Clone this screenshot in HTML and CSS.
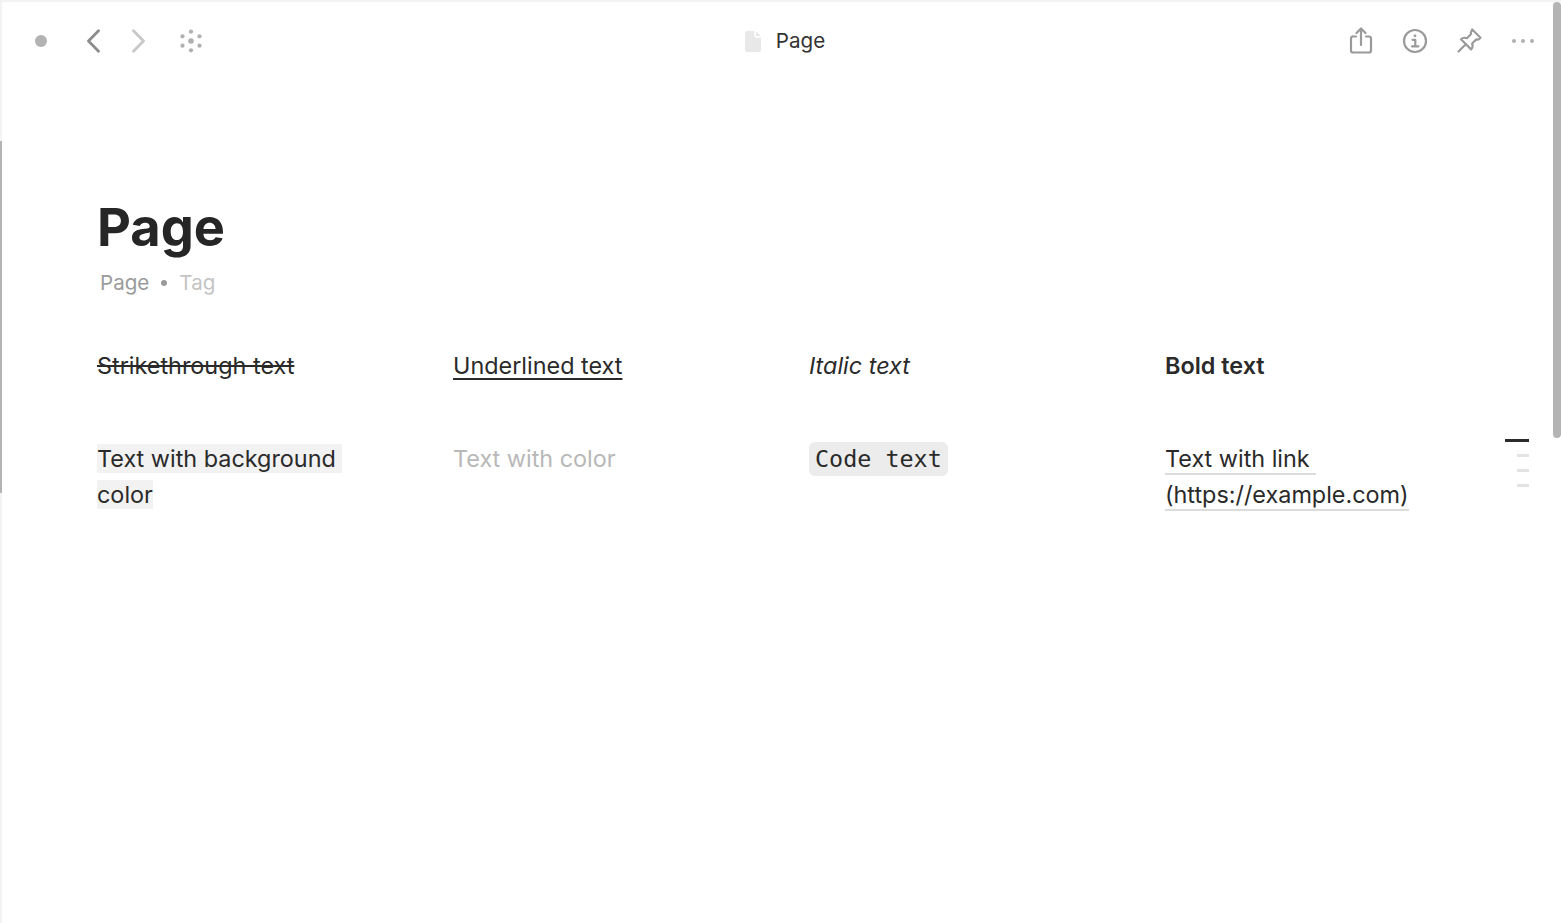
FILE: index.html
```html
<!DOCTYPE html>
<html lang="en">
<head>
    <meta charset="UTF-8">
    <meta name="viewport" content="width=device-width, initial-scale=1.0">
    <title>Page</title>
    <link rel="stylesheet" href="styles.css">
</head>
<body>

<div class="window">
    <div class="left-bar"></div>
    <div class="scroll-thumb"></div>

    <header class="topbar">
        <div class="topbar-left">
            <span class="status-dot"></span>
            <svg class="icon nav-back" viewBox="0 0 24 24"><path d="M17.5 1.8 7.5 12l10 10.200"/></svg>
            <svg class="icon nav-forward" viewBox="0 0 24 24"><path d="M6.500 1.800 16.500 12l-10 10.200"/></svg>
            <svg class="icon nav-graph" viewBox="0 0 24 24">
                <circle cx="12" cy="12" r="2.8"/>
                <circle cx="12" cy="2.700" r="2.100"/>
                <circle cx="12" cy="21.300" r="2.100"/>
                <circle cx="3.500" cy="7.300" r="2.100"/>
                <circle cx="20.500" cy="7.300" r="2.100"/>
                <circle cx="3.500" cy="16.700" r="2.100"/>
                <circle cx="20.500" cy="16.700" r="2.100"/>
            </svg>
        </div>

        <div class="topbar-title">
            <svg class="doc-icon" viewBox="0 0 16 21"><path d="M2 0h7.200v4.600c0 1.200.9 2.100 2.100 2.100H16V19a2 2 0 0 1-2 2H2a2 2 0 0 1-2-2V2a2 2 0 0 1 2-2Zm9 .3 4.700 4.800h-3.800c-.5 0-.9-.4-.9-.9V.3Z"/></svg>
            <span class="topbar-name">Page</span>
        </div>

        <div class="topbar-right">
            <svg class="icon action" viewBox="0 0 28 28">
                <path d="M9 9.500H6.500A2 2 0 0 0 4 11.500v12A2 2 0 0 0 6 25.500h16a2 2 0 0 0 2-2v-12a2 2 0 0 0-2-2h-3"/>
                <path d="M14 18V1.500M9.500 6 14 1.500 18.500 6"/>
            </svg>
            <svg class="icon action" viewBox="0 0 28 28">
                <circle cx="14" cy="14" r="11"/>
                <path d="M11.500 12.800H14.300V19M11 19.300h6.400"/>
                <circle class="info-dot" cx="14" cy="8.800" r="1.400"/>
            </svg>
            <svg class="icon action" viewBox="0 0 28 28">
                <path d="M17.200 2.500 25.500 10.800l-1.300 1.200c-.8.700-1.900.8-2.800.3l-4.200 4.200c.8 2.200.4 4.400-1.100 5.900L6 12.300c1.500-1.500 3.700-1.900 5.900-1.100l4.200-4.200c-.5-.9-.4-2 .3-2.800Z"/>
                <path d="M10.800 17.200 3.500 24.500"/>
            </svg>
            <svg class="icon action more" viewBox="0 0 24 6">
                <circle cx="3" cy="3" r="2"/>
                <circle cx="12" cy="3" r="2"/>
                <circle cx="21" cy="3" r="2"/>
            </svg>
        </div>
    </header>

    <main class="page">
        <h1 class="page-title">Page</h1>
        <div class="page-meta">
            <span class="meta-page">Page</span>
            <span class="meta-dot"></span>
            <span class="meta-tag">Tag</span>
        </div>

        <div class="columns">
            <p class="cell"><s>Strikethrough text</s></p>
            <p class="cell"><u class="underlined">Underlined text</u></p>
            <p class="cell"><em>Italic text</em></p>
            <p class="cell"><strong class="bold">Bold text</strong></p>

            <p class="cell"><mark class="highlight">Text with background color</mark></p>
            <p class="cell faded">Text with color</p>
            <p class="cell"><code class="code-text">Code text</code></p>
            <p class="cell"><a class="link" href="#">Text with link (https://example.com)</a></p>
        </div>
    </main>

    <nav class="outline">
        <span class="outline-line current"></span>
        <span class="outline-line"></span>
        <span class="outline-line"></span>
        <span class="outline-line"></span>
    </nav>
</div>

</body>
</html>
```

FILE: styles.css
```css
* {
    box-sizing: border-box;
}

html, body {
    height: 100%;
}

body {
    margin: 0;
    background: #fff;
    color: #2a2a2a;
    font-family: 'Inter', 'Liberation Sans', sans-serif;
    overflow: hidden;
}

.window {
    position: relative;
    height: 923px;
    border-top: 2px solid #f3f3f3;
    border-left: 2px solid #f3f3f3;
}

.left-bar {
    position: absolute;
    left: -2px;
    top: 139px;
    width: 2px;
    height: 352px;
    background: #b4b4b4;
}

.scroll-thumb {
    position: absolute;
    right: 0;
    top: 0;
    width: 8px;
    height: 436px;
    background: #b4b4b4;
    border-radius: 4px;
}

.topbar {
    display: grid;
    grid-template-columns: 1fr auto 1fr;
    align-items: center;
    height: 78px;
    padding: 0 26px 0 33px;
}

.topbar-left {
    display: flex;
    align-items: center;
}

.topbar-right {
    display: flex;
    align-items: center;
    justify-content: flex-end;
    gap: 26px;
}

.icon {
    fill: none;
    stroke: #9a9a9a;
    stroke-width: 2;
    stroke-linecap: round;
    stroke-linejoin: round;
    flex: none;
}

.status-dot {
    width: 12px;
    height: 12px;
    border-radius: 50%;
    background: #b3b3b3;
    margin-right: 34px;
}

.nav-back {
    width: 24px;
    height: 24px;
    stroke-width: 2.8;
    stroke: #8c8c8c;
    margin-right: 22px;
}

.nav-forward {
    width: 24px;
    height: 24px;
    stroke-width: 2.8;
    stroke: #c8c8c8;
    margin-right: 28px;
}

.nav-graph {
    width: 24px;
    height: 24px;
    fill: #b0b0b0;
    stroke: none;
}

.topbar-title {
    display: flex;
    align-items: center;
    gap: 15px;
    font-size: 20.6px;
    color: #333;
}

.topbar-name {
    margin-top: -2px;
}

.doc-icon {
    width: 16px;
    height: 21px;
    fill: #e8e8e8;
}

.action {
    width: 28px;
    height: 28px;
    stroke-width: 2.2;
}

.info-dot {
    fill: #9a9a9a;
    stroke: none;
}

.action.more {
    width: 24px;
    height: 6px;
    margin-left: 2px;
    fill: #b0b0b0;
    stroke: none;
}

.page {
    padding: 115px 0 0 95px;
}

.page-title {
    margin: 0;
    font-size: 52.4px;
    line-height: 64px;
    font-weight: 700;
    color: #262626;
}

.page-meta {
    display: flex;
    align-items: center;
    margin: 9px 0 0 3px;
    font-size: 20.6px;
    line-height: 30px;
}

.meta-page {
    color: #9b9b9b;
}

.meta-dot {
    width: 6px;
    height: 6px;
    border-radius: 50%;
    background: #9b9b9b;
    margin: 0 12px;
}

.meta-tag {
    color: #c4c4c4;
}

.columns {
    display: grid;
    grid-template-columns: repeat(4, 356px);
    row-gap: 57px;
    margin-top: 50px;
}

.cell {
    margin: 0;
    max-width: 262px;
    font-size: 23.4px;
    line-height: 36px;
    white-space: pre-wrap;
}

.bold {
    font-weight: 600;
}

.underlined {
    text-decoration-thickness: 2px;
    text-underline-offset: 4px;
}

.highlight {
    background: #f2f2f2;
    color: inherit;
}

.faded {
    color: #b8b8b8;
}

.code-text {
    font-family: 'DejaVu Sans Mono', 'Liberation Mono', monospace;
    font-size: 23.4px;
    background: #ececec;
    border-radius: 6px;
    padding: 3px 6px;
}

.link {
    color: inherit;
    text-decoration: none;
    border-bottom: 2px solid #dcdcdc;
}

.outline {
    position: absolute;
    top: 437px;
    right: 32px;
    display: flex;
    flex-direction: column;
    align-items: flex-end;
    gap: 12px;
}

.outline-line {
    width: 12px;
    height: 3px;
    background: #e3e3e3;
}

.outline-line.current {
    width: 24px;
    background: #2c2c2c;
}
```
